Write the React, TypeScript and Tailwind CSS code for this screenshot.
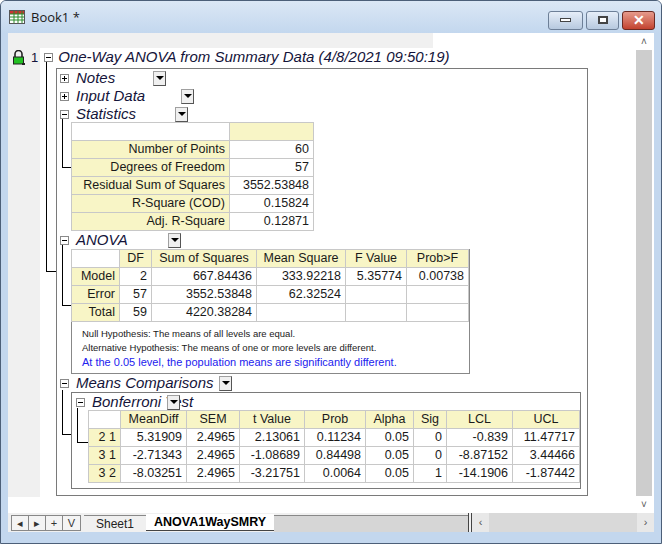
import React from "react";

const F = { fontFamily: '"Liberation Sans", Arial, sans-serif' };

function Toggle({ minus }: { minus?: boolean }) {
  return (
    <div className="w-[9px] h-[9px] border border-[#8a8a8a] bg-white flex items-center justify-center relative shrink-0">
      <div className="w-[5px] h-px bg-black" />
      {!minus && <div className="absolute w-px h-[5px] bg-black" />}
    </div>
  );
}

function Drop() {
  return (
    <div className="w-[13px] h-[15px] bg-[#f0f0f0] border border-[#a0a0a0] border-b-[#555] border-r-[#555] flex items-center justify-center shrink-0">
      <div className="w-0 h-0 border-l-[4px] border-r-[4px] border-t-[4px] border-l-transparent border-r-transparent border-t-black" />
    </div>
  );
}

function Head({ minus, label, w, ml = 3 }: { minus?: boolean; label: string; w: number; ml?: number }) {
  return (
    <div className="h-[18px] flex items-center" style={{ marginLeft: ml }}>
      <Toggle minus={minus} />
      <span className="italic text-[15px] text-[#14143a] ml-[7px] whitespace-nowrap" style={{ width: w }}>{label}</span>
      <Drop />
    </div>
  );
}

const Y = "bg-[#f8f5c6]";
const cell = "border border-[#c8c8c8] h-[18px] px-[4px] text-right text-[12.5px] text-[#1a1a1a] whitespace-nowrap leading-none";
const hcell = "border border-[#c8c8c8] h-[18px] px-[3px] text-center text-[12.5px] text-[#1a1a1a] whitespace-nowrap leading-none";

function Line({ x, y, w, h }: { x: number; y: number; w: number; h: number }) {
  return <div className="absolute bg-black" style={{ left: x - 8, top: y - 33, width: w, height: h }} />;
}

export default function App() {
  const stats: [string, string][] = [
    ["Number of Points", "60"],
    ["Degrees of Freedom", "57"],
    ["Residual Sum of Squares", "3552.53848"],
    ["R-Square (COD)", "0.15824"],
    ["Adj. R-Square", "0.12871"],
  ];
  const anova = [
    ["Model", "2", "667.84436", "333.92218", "5.35774", "0.00738"],
    ["Error", "57", "3552.53848", "62.32524", "", ""],
    ["Total", "59", "4220.38284", "", "", ""],
  ];
  const aw = [48, 32, 105, 89, 61, 62];
  const bon = [
    ["2 1", "5.31909", "2.4965", "2.13061", "0.11234", "0.05", "0", "-0.839", "11.47717"],
    ["3 1", "-2.71343", "2.4965", "-1.08689", "0.84498", "0.05", "0", "-8.87152", "3.44466"],
    ["3 2", "-8.03251", "2.4965", "-3.21751", "0.0064", "0.05", "1", "-14.1906", "-1.87442"],
  ];
  const bw = [32, 66, 53, 65, 61, 48, 33, 66, 67];
  const bh = ["", "MeanDiff", "SEM", "t Value", "Prob", "Alpha", "Sig", "LCL", "UCL"];

  return (
    <div style={F} className="w-[662px] h-[544px] bg-[#c3d7ee] border border-[#4c5f78] rounded-t-[6px] flex flex-col overflow-hidden">
      {/* title bar */}
      <div className="h-[32px] flex items-center pl-[8px] pr-[6px] bg-gradient-to-b from-[#dbe7f5] to-[#c3d7ee]">
        <svg width="16" height="14" viewBox="0 0 16 14">
          <rect x="0.5" y="0.5" width="15" height="13" fill="#fff" stroke="#555" />
          <rect x="1" y="1" width="14" height="3" fill="#c33" />
          {[5, 9, 13].map((x) => <line key={x} x1={x} y1="1" x2={x} y2="13" stroke="#2a8a2a" />)}
          {[4, 7, 10].map((y) => <line key={y} x1="1" y1={y} x2="15" y2={y} stroke="#2a8a2a" />)}
        </svg>
        <span className="ml-[6px] text-[13px] text-[#1a1a1a] mt-[2px]" style={{ fontFamily: '"Open Sans", "Liberation Sans", sans-serif' }}>Book1 *</span>
        <div className="ml-auto flex gap-[3px] mt-[6px]">
          <div className="w-[35px] h-[19px] rounded-[3px] border border-[#6d7f97] bg-gradient-to-b from-[#e6eef8] to-[#b7c9df] flex items-center justify-center">
            <div className="w-[11px] h-[4px] bg-white border border-[#444]" />
          </div>
          <div className="w-[33px] h-[19px] rounded-[3px] border border-[#6d7f97] bg-gradient-to-b from-[#e6eef8] to-[#b7c9df] flex items-center justify-center">
            <div className="w-[10px] h-[8px] border-[2px] border-[#444] bg-white" />
          </div>
          <div className="w-[33px] h-[19px] rounded-[3px] border border-[#6b2a22] bg-gradient-to-b from-[#e59a8c] to-[#c2412e] flex items-center justify-center text-white font-bold text-[14px] leading-none">
            ✕
          </div>
        </div>
      </div>

      {/* content */}
      <div className="mx-[7px] h-[480px] flex bg-white">
        <div className="relative w-[628px] h-full overflow-hidden bg-white">
          <div className="absolute left-0 top-0 w-[32px] h-[464px] bg-[#f0f0f0]" />
          <div className="absolute left-0 top-0 w-[425px] h-[15px] bg-[#f0f0f0]" />
          <Line x={46} y={62} w={1} h={210} />
          <Line x={46} y={271} w={10} h={1} />
          <Line x={62} y={118} w={1} h={50} />
          <Line x={62} y={167} w={9} h={1} />
          <Line x={62} y={244} w={1} h={62} />
          <Line x={62} y={305} w={9} h={1} />
          <Line x={62} y={390} w={1} h={45} />
          <Line x={62} y={434} w={9} h={1} />
          <Line x={77} y={408} w={1} h={35} />
          <Line x={77} y={442} w={11} h={1} />

          <div className="relative pt-[17px]">
            {/* title row */}
            <div className="h-[15px] flex items-center">
              <svg className="ml-[4px]" width="13" height="15" viewBox="0 0 13 15">
                <path d="M3 7 V4 a3.5 3.5 0 0 1 7 0 V7" fill="none" stroke="#222" strokeWidth="1.6" />
                <rect x="1.5" y="7" width="10" height="7" fill="#22c022" stroke="#222" />
                <rect x="10" y="13" width="3" height="2" fill="#222" />
              </svg>
              <span className="ml-[6px] text-[13px] text-[#14143a]">1</span>
              <div className="ml-[6px]"><Toggle minus /></div>
              <span className="ml-[5px] italic text-[15px] text-[#14143a] whitespace-nowrap">One-Way ANOVA from Summary Data (4/8/2021 09:50:19)</span>
            </div>

            {/* big box */}
            <div className="ml-[48px] mt-[3px] w-[532px] h-[428px] border border-[#7a7a7a]">
              <Head label="Notes" w={77} />
              <Head label="Input Data" w={105} />
              <Head minus label="Statistics" w={99} />
              <table className="ml-[14px] mt-[-1px] border-collapse border border-[#888]">
                <tbody>
                  <tr>
                    <td className={`${cell} w-[158px] bg-white`} />
                    <td className={`${cell} w-[84px] ${Y}`} />
                  </tr>
                  {stats.map(([a, b]) => (
                    <tr key={a}>
                      <td className={`${cell} ${Y}`}>{a}</td>
                      <td className={`${cell} bg-white`}>{b}</td>
                    </tr>
                  ))}
                </tbody>
              </table>
              <Head minus label="ANOVA" w={92} />
              <div className="ml-[14px] w-[399px] h-[125px] border border-[#888]">
                <table className="border-collapse -mt-px -ml-px">
                  <tbody>
                    <tr>
                      {["", "DF", "Sum of Squares", "Mean Square", "F Value", "Prob>F"].map((h, i) => (
                        <td key={i} className={`${hcell} ${i === 0 ? "bg-white" : Y}`} style={{ width: aw[i] }}>{h}</td>
                      ))}
                    </tr>
                    {anova.map((r) => (
                      <tr key={r[0]}>
                        {r.map((v, i) => (
                          <td key={i} className={`${cell} ${i === 0 ? Y : "bg-white"}`} style={{ width: aw[i] }}>{v}</td>
                        ))}
                      </tr>
                    ))}
                  </tbody>
                </table>
                <div className="pl-[10px] pt-[5px] text-[9.5px] leading-[14px] text-[#1a1a1a]">
                  <div>Null Hypothesis: The means of all levels are equal.</div>
                  <div>Alternative Hypothesis: The means of one or more levels are different.</div>
                  <div className="text-[11px] text-[#2222ee]">At the 0.05 level, the population means are significantly different.</div>
                </div>
              </div>
              <Head minus label="Means Comparisons" w={143} />
              <div className="ml-[14px] w-[510px] h-[97px] border border-[#7a7a7a]">
                <Head minus label="Bonferroni Test" w={75} ml={4} />
                <table className="ml-[16px] -mt-px border-collapse border border-[#888]">
                  <tbody>
                    <tr>
                      {bh.map((h, i) => (
                        <td key={i} className={`${hcell} ${i === 0 ? "bg-white" : Y}`} style={{ width: bw[i] }}>{h}</td>
                      ))}
                    </tr>
                    {bon.map((r) => (
                      <tr key={r[0]}>
                        {r.map((v, i) => (
                          <td key={i} className={`${cell} ${i === 0 ? Y : "bg-white"}`} style={{ width: bw[i] }}>{v}</td>
                        ))}
                      </tr>
                    ))}
                  </tbody>
                </table>
              </div>
            </div>
          </div>
        </div>
        {/* vertical scrollbar */}
        <div className="w-[16px] h-full bg-[#e8e8e8] flex flex-col items-center">
          <div className="h-[17px] w-full bg-white flex items-center justify-center text-[10px] text-[#555]">˄</div>
          <div className="flex-1 w-full bg-[#cdcdcd]" />
          <div className="h-[17px] w-full bg-white flex items-center justify-center text-[10px] text-[#555]">˅</div>
        </div>
      </div>

      {/* tab bar */}
      <div className="mx-[7px] h-[19px] flex items-stretch bg-[#f0f0f0] text-[12px]">
        <div className="flex ml-[3px] mt-[2px] h-[16px] border border-[#888]">
          {["◂", "▸", "+", "V"].map((c, i) => (
            <div key={i} className={`w-[17px] flex items-center justify-center bg-[#f4f4f4] text-[11px] text-[#333] ${i < 3 ? "border-r border-[#888]" : ""}`}>{c}</div>
          ))}
        </div>
        <div className="ml-[3px] mt-[2px] h-[16px] px-[12px] flex items-center text-[12px] text-[#222] border-t border-[#888] bg-[#f0f0f0]">Sheet1</div>
        <div className="h-[17px] mt-[1px] px-[8px] flex items-center font-bold text-[12.5px] text-black bg-white border-b border-[#444]">ANOVA1WaySMRY</div>
        <div className="flex-1 bg-[#d6d6d6] border-t border-[#888] mt-[2px]" />
        <div className="w-[4px] border-l border-r border-[#444] bg-[#f0f0f0]" />
        <div className="w-[182px] flex items-center bg-[#e8e8e8]">
          <div className="w-[17px] text-center text-[11px] text-[#555]">‹</div>
          <div className="flex-1 h-full bg-[#d9d9d9]" />
          <div className="w-[17px] text-center text-[11px] text-[#555]">›</div>
        </div>
      </div>
    </div>
  );
}
